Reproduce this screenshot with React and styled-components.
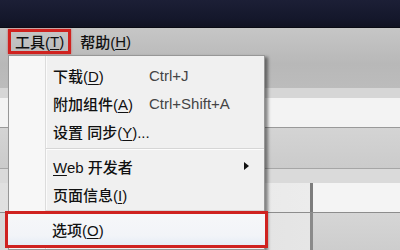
import React from "react";
import styled, { createGlobalStyle } from "styled-components";

const Global = createGlobalStyle`
  html, body { margin: 0; padding: 0; }
  body {
    width: 400px; height: 250px; overflow: hidden;
    background: #d2d2d2;
    font-family: "Liberation Sans", "Noto Sans CJK SC", sans-serif;
  }
`;

const Page = styled.div`
  position: relative;
  width: 400px;
  height: 250px;
  overflow: hidden;
  display: flex;
  flex-direction: column;
`;

const TopBand = styled.div`
  height: 27px;
  flex: none;
  background: linear-gradient(180deg, #1c1f36 0%, #14172b 70%, #101222 100%);
  border-bottom: 1px solid #0a0b14;
`;

const ChromeArea = styled.div`
  height: 60px;
  flex: none;
  background: linear-gradient(180deg, #c6c6c6 0%, #b8b8b8 60%, #bcbcbc 100%);
`;

const MenuBar = styled.div`
  display: flex;
  align-items: center;
  height: 27px;
  padding-left: 8px;
  gap: 2px;
`;

const MenuBarItem = styled.div`
  height: 25px;
  display: flex;
  align-items: center;
  padding: 0 4px;
  font-size: 15px;
  font-weight: 500;
  color: #111;
  box-sizing: border-box;
  border: 3px solid ${(p) => (p.$marked ? "#d0221f" : "transparent")};
  box-shadow: ${(p) => (p.$marked ? "0 0 2px rgba(200,30,30,.6)" : "none")};
`;

const Key = styled.span`
  text-decoration: underline;
  text-underline-offset: 2px;
`;

const Strip = styled.div`
  flex: none;
  height: ${(p) => p.$h}px;
  background: ${(p) => p.$bg};
  border-bottom: ${(p) => (p.$line ? `1px solid ${p.$line}` : "none")};
  display: flex;
`;

const StripGap = styled.div`
  width: 310px;
  flex: none;
  background: linear-gradient(90deg, #e0e0e0, #ececec);
  border-right: 3px solid #7d7d7d;
`;

const StripFill = styled.div`
  flex: 1;
  background: #f4f4f4;
`;

const LowerArea = styled.div`
  flex: 1;
  display: flex;
  background: linear-gradient(180deg, #d6d6d6, #cdcdcd);
`;

const LowerGap = styled.div`
  width: 310px;
  flex: none;
  background: linear-gradient(90deg, #d8d8d8, #e6e6e6);
  border-right: 3px solid #8a8a8a;
`;

const Menu = styled.div`
  position: absolute;
  left: 8px;
  top: 55px;
  width: 257px;
  padding: 5px 0 4px;
  box-sizing: border-box;
  background: linear-gradient(90deg, #f7f7f7 0 36px, #dcdcdc 36px 37px, #fbfbfb 37px 38px, #f0f0f0 38px);
  border: 1px solid #979797;
  box-shadow: 3px 2px 3px rgba(0, 0, 0, 0.45);
`;

const Item = styled.div`
  position: relative;
  height: 28px;
  display: grid;
  grid-template-columns: 44px 96px 1fr 20px;
  align-items: center;
  font-size: 15px;
  font-weight: 500;
  color: #111;
  ${(p) =>
    p.$marked &&
    `
    margin: 0 -1px;
    height: 31px;
    outline: 3px solid #cf2220;
    outline-offset: 0px;
    background: linear-gradient(180deg, #f6f7f9 0%, #f2f4f8 70%, #e6edf6 100%);
    box-shadow: 0 0 3px rgba(200,30,30,.5);
  `}
`;

const Label = styled.span`
  grid-column: 2;
  white-space: nowrap;
`;

const Shortcut = styled.span`
  grid-column: 3;
  color: #444;
  font-weight: 400;
  white-space: nowrap;
`;

const Arrow = styled.span`
  grid-column: 4;
  width: 0;
  height: 0;
  border-top: 4px solid transparent;
  border-bottom: 4px solid transparent;
  border-left: 5px solid #111;
`;

const Separator = styled.div`
  height: ${(p) => p.$h || 7}px;
  display: flex;
  align-items: center;
  padding-left: 37px;
  &::after {
    content: "";
    flex: 1;
    height: 1px;
    background: #d6d6d6;
    border-bottom: 1px solid #fdfdfd;
  }
`;

export default function App() {
  return (
    <Page>
      <Global />
      <TopBand />
      <ChromeArea>
        <MenuBar>
          <MenuBarItem $marked>
            工具(<Key>T</Key>)
          </MenuBarItem>
          <MenuBarItem>
            帮助(<Key>H</Key>)
          </MenuBarItem>
        </MenuBar>
      </ChromeArea>
      <Strip $h={10} $bg="#d6d6d6" />
      <Strip $h={29} $bg="#f3f3f3" $line="#999999" />
      <Strip $h={40} $bg="linear-gradient(180deg,#d4d4d4,#cbcbcb)" $line="#a6a6a6" />
      <Strip $h={14} $bg="#dadada" />
      <Strip $h={29} $bg="#f4f4f4" $line="#8d8d8d">
        <StripGap />
        <StripFill />
      </Strip>
      <LowerArea>
        <LowerGap />
      </LowerArea>

      <Menu>
        <Item>
          <Label>
            下载(<Key>D</Key>)
          </Label>
          <Shortcut>Ctrl+J</Shortcut>
        </Item>
        <Item>
          <Label>
            附加组件(<Key>A</Key>)
          </Label>
          <Shortcut>Ctrl+Shift+A</Shortcut>
        </Item>
        <Item>
          <Label>
            设置 同步(<Key>Y</Key>)...
          </Label>
        </Item>
        <Separator />
        <Item>
          <Label>
            <Key>W</Key>eb 开发者
          </Label>
          <Arrow />
        </Item>
        <Item>
          <Label>
            页面信息(<Key>I</Key>)
          </Label>
        </Item>
        <Separator $h={6} />
        <Item $marked>
          <Label>
            选项(<Key>O</Key>)
          </Label>
        </Item>
      </Menu>
    </Page>
  );
}
